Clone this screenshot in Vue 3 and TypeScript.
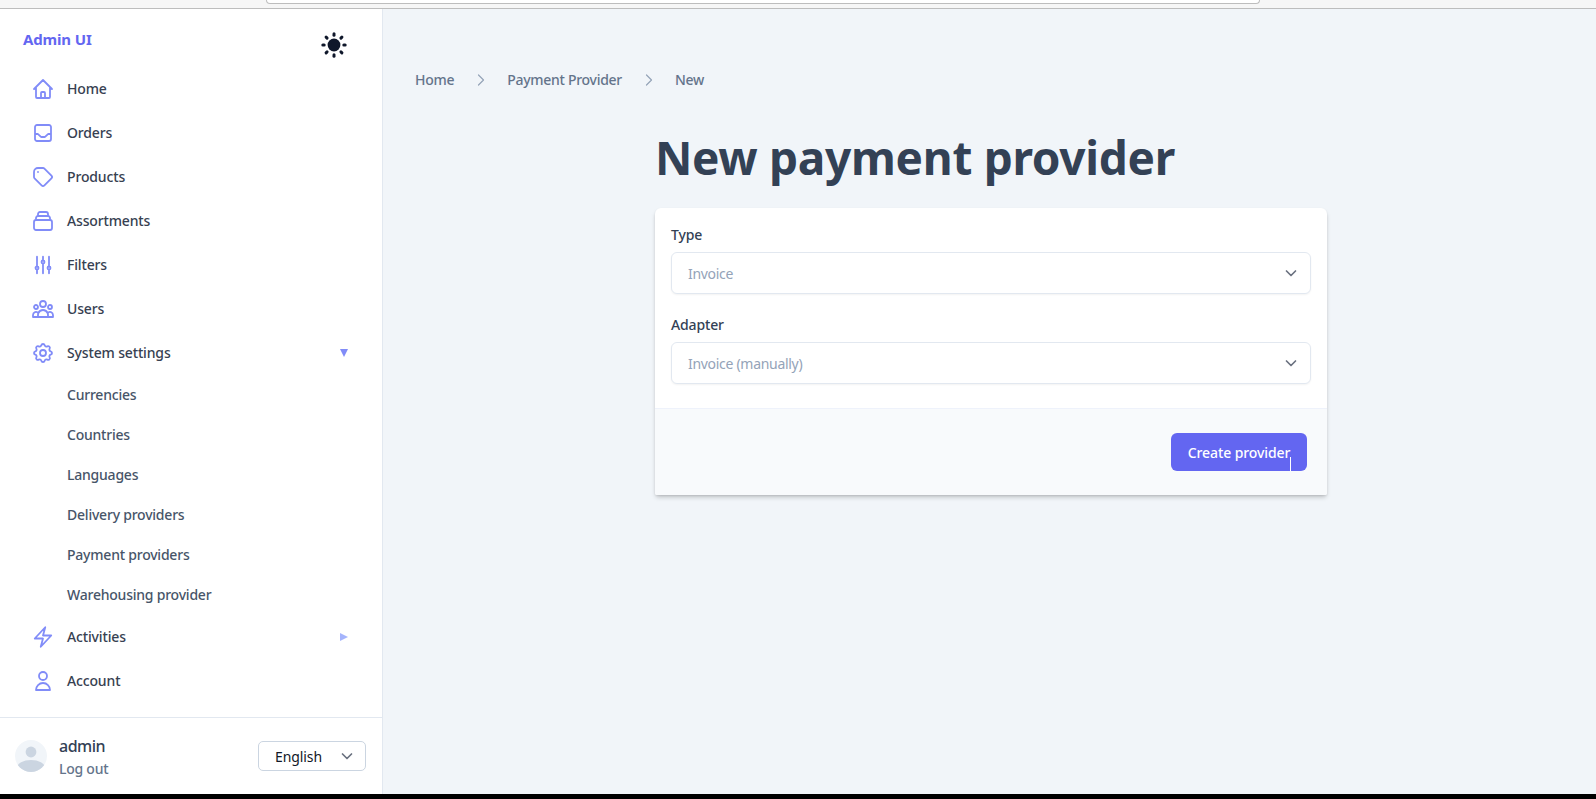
<script setup lang="ts">
interface NavItem {
  label: string
  icon: string[]
  caret?: 'down' | 'right'
  children?: string[]
}

const navItems: NavItem[] = [
  { label: 'Home', icon: ['M3 12l2-2m0 0l7-7 7 7M5 10v10a1 1 0 001 1h3m10-11l2 2m-2-2v10a1 1 0 01-1 1h-3m-6 0a1 1 0 001-1v-4a1 1 0 011-1h2a1 1 0 011 1v4a1 1 0 001 1m-6 0h6'] },
  { label: 'Orders', icon: ['M20 13V6a2 2 0 00-2-2H6a2 2 0 00-2 2v7m16 0v5a2 2 0 01-2 2H6a2 2 0 01-2-2v-5m16 0h-2.586a1 1 0 00-.707.293l-2.414 2.414a1 1 0 01-.707.293h-3.172a1 1 0 01-.707-.293l-2.414-2.414A1 1 0 006.586 13H4'] },
  { label: 'Products', icon: ['M7 7h.01M7 3h5c.512 0 1.024.195 1.414.586l7 7a2 2 0 010 2.828l-7 7a2 2 0 01-2.828 0l-7-7A1.994 1.994 0 013 12V7a4 4 0 014-4z'] },
  { label: 'Assortments', icon: ['M19 11H5m14 0a2 2 0 012 2v6a2 2 0 01-2 2H5a2 2 0 01-2-2v-6a2 2 0 012-2m14 0V9a2 2 0 00-2-2M5 11V9a2 2 0 012-2m0 0V5a2 2 0 012-2h6a2 2 0 012 2v2M7 7h10'] },
  { label: 'Filters', icon: ['M6 13.5V3.75m0 9.75a1.5 1.5 0 010 3m0-3a1.5 1.5 0 000 3m0 3.75V16.5m12-3V3.75m0 9.75a1.5 1.5 0 010 3m0-3a1.5 1.5 0 000 3m0 3.75V16.5m-6-9V3.75m0 3.75a1.5 1.5 0 010 3m0-3a1.5 1.5 0 000 3m0 9.75V10.5'] },
  { label: 'Users', icon: ['M17 20h5v-2a3 3 0 00-5.356-1.857M17 20H7m10 0v-2c0-.656-.126-1.283-.356-1.857M7 20H2v-2a3 3 0 015.356-1.857M7 20v-2c0-.656.126-1.283.356-1.857m0 0a5.002 5.002 0 019.288 0M15 7a3 3 0 11-6 0 3 3 0 016 0zm6 3a2 2 0 11-4 0 2 2 0 014 0zM7 10a2 2 0 11-4 0 2 2 0 014 0z'] },
  {
    label: 'System settings',
    caret: 'down',
    icon: [
      'M10.325 4.317c.426-1.756 2.924-1.756 3.35 0a1.724 1.724 0 002.573 1.066c1.543-.94 3.31.826 2.37 2.37a1.724 1.724 0 001.065 2.572c1.756.426 1.756 2.924 0 3.35a1.724 1.724 0 00-1.066 2.573c.94 1.543-.826 3.31-2.37 2.37a1.724 1.724 0 00-2.572 1.065c-.426 1.756-2.924 1.756-3.35 0a1.724 1.724 0 00-2.573-1.066c-1.543.94-3.31-.826-2.37-2.37a1.724 1.724 0 00-1.065-2.572c-1.756-.426-1.756-2.924 0-3.35a1.724 1.724 0 001.066-2.573c-.94-1.543.826-3.31 2.37-2.37.996.608 2.296.07 2.572-1.065z',
      'M15 12a3 3 0 11-6 0 3 3 0 016 0z',
    ],
    children: ['Currencies', 'Countries', 'Languages', 'Delivery providers', 'Payment providers', 'Warehousing provider'],
  },
  { label: 'Activities', caret: 'right', icon: ['M3.75 13.5l10.5-11.25L12 10.5h8.25L9.75 21.75 12 13.5H3.75z'] },
  { label: 'Account', icon: ['M16 7a4 4 0 11-8 0 4 4 0 018 0zM12 14a7 7 0 00-7 7h14a7 7 0 00-7-7z'] },
]

const crumbs: string[] = ['Home', 'Payment Provider', 'New']
const sunRays: number[] = [0, 45, 90, 135, 180, 225, 270, 315]

const fields: { label: string; value: string }[] = [
  { label: 'Type', value: 'Invoice' },
  { label: 'Adapter', value: 'Invoice (manually)' },
]
</script>

<template>
  <div class="page">
    <div class="browser-strip"><div class="url-bar"></div></div>
    <div class="body">
      <aside class="sidebar">
        <div class="brand-row">
          <span class="brand">Admin UI</span>
          <svg class="sun" viewBox="0 0 26 26">
            <circle cx="13" cy="13" r="6.4" fill="#0f172a" />
            <line
              v-for="deg in sunRays"
              :key="deg"
              x1="13"
              y1="1.8"
              x2="13"
              y2="3.2"
              stroke="#0f172a"
              stroke-width="3"
              stroke-linecap="round"
              :transform="`rotate(${deg} 13 13)`"
            />
          </svg>
        </div>
        <nav class="nav">
          <template v-for="item in navItems" :key="item.label">
            <div class="nav-item">
              <svg class="nav-icon" viewBox="0 0 24 24" fill="none" stroke="currentColor" stroke-width="1.8" stroke-linecap="round" stroke-linejoin="round">
                <path v-for="d in item.icon" :key="d" :d="d" />
              </svg>
              <span class="nav-label">{{ item.label }}</span>
              <svg v-if="item.caret === 'down'" class="caret" viewBox="0 0 8 8"><polygon points="0,0 8,0 4,8" fill="#818cf8" /></svg>
              <svg v-if="item.caret === 'right'" class="caret" viewBox="0 0 8 8"><polygon points="0,0 8,4 0,8" fill="#a5b4fc" /></svg>
            </div>
            <div v-for="child in item.children" :key="child" class="nav-child">{{ child }}</div>
          </template>
        </nav>
        <div class="user-row">
          <svg class="avatar" viewBox="0 0 32 32">
            <defs><clipPath id="avatar-clip"><circle cx="16" cy="16" r="16" /></clipPath></defs>
            <g clip-path="url(#avatar-clip)">
              <rect width="32" height="32" fill="#f1f5f9" />
              <circle cx="16" cy="12" r="5.4" fill="#cbd5e1" />
              <ellipse cx="16" cy="28" rx="14" ry="8" fill="#cbd5e1" />
            </g>
          </svg>
          <div class="user-text">
            <span class="user-name">admin</span>
            <span class="logout">Log out</span>
          </div>
          <div class="lang-select">
            <span>English</span>
            <svg class="chev" viewBox="0 0 20 20" fill="none" stroke="#6b7280" stroke-width="1.7" stroke-linecap="round" stroke-linejoin="round"><path d="M5.5 8l4.5 4.5L14.5 8" /></svg>
          </div>
        </div>
      </aside>
      <main class="main">
        <ol class="crumbs">
          <template v-for="(crumb, i) in crumbs" :key="crumb">
            <li class="crumb">{{ crumb }}</li>
            <li v-if="i < crumbs.length - 1" class="crumb-sep">
              <svg viewBox="0 0 8 14" fill="none" stroke="#94a3b8" stroke-width="1.2" stroke-linecap="round" stroke-linejoin="round"><path d="M1.5 2l5 5-5 5" /></svg>
            </li>
          </template>
        </ol>
        <section class="content">
          <h1 class="title">New payment provider</h1>
          <form class="card" @submit.prevent>
            <div class="card-body">
              <div v-for="field in fields" :key="field.label" class="field">
                <label class="field-label">{{ field.label }}</label>
                <div class="select">
                  <span>{{ field.value }}</span>
                  <svg class="chev" viewBox="0 0 20 20" fill="none" stroke="#6b7280" stroke-width="1.7" stroke-linecap="round" stroke-linejoin="round"><path d="M5.5 8l4.5 4.5L14.5 8" /></svg>
                </div>
              </div>
            </div>
            <div class="card-footer">
              <button class="submit" type="submit">Create provider<span class="text-cursor"></span></button>
            </div>
          </form>
        </section>
      </main>
    </div>
    <div class="black-bar"></div>
  </div>
</template>

<style>
html, body { margin: 0; padding: 0; background: #000; }
</style>

<style scoped>
.page {
  width: 1596px;
  height: 799px;
  display: flex;
  flex-direction: column;
  overflow: hidden;
  font-family: "Noto Sans", "Open Sans", sans-serif;
}
.browser-strip {
  height: 8px;
  flex: none;
  background: #f6f6f6;
  border-bottom: 1px solid #bdbdbd;
  display: flex;
  justify-content: flex-start;
  padding-left: 266px;
}
.url-bar {
  width: 992px;
  height: 3px;
  background: #fff;
  border: 1px solid #bdbdbd;
  border-top: 0;
  border-radius: 0 0 5px 5px;
}
.body { flex: 1; display: flex; min-height: 0; }
.black-bar { height: 5px; flex: none; background: #000; }

.sidebar {
  width: 383px;
  flex: none;
  background: #fff;
  border-right: 1px solid #e2e8f0;
  box-sizing: border-box;
  display: flex;
  flex-direction: column;
}
.brand-row {
  height: 58px;
  flex: none;
  display: flex;
  justify-content: space-between;
  padding: 19px 35px 0 23px;
  box-sizing: border-box;
}
.brand { font-size: 15px; line-height: 22px; font-weight: 700; color: #6366f1; letter-spacing: -0.15px; }
.sun { width: 26px; height: 26px; margin-top: 4px; }
.nav { flex: 1; display: flex; flex-direction: column; }
.nav-item {
  height: 44px;
  display: flex;
  align-items: center;
  padding: 0 34px 0 31px;
  flex: none;
}
.nav-icon { width: 24px; height: 24px; color: #818cf8; flex: none; }
.nav-label {
  margin: 0 0 2px 12px;
  flex: 1;
  font-size: 14px;
  font-weight: 500;
  color: #374151;
  letter-spacing: -0.15px;
}
.caret { width: 8px; height: 8px; flex: none; }
.nav-child {
  height: 40px;
  line-height: 40px;
  padding-left: 67px;
  font-size: 14px;
  font-weight: 500;
  color: #475569;
  letter-spacing: -0.22px;
  flex: none;
}
.user-row {
  height: 77px;
  flex: none;
  border-top: 1px solid #e2e8f0;
  box-sizing: border-box;
  display: flex;
  align-items: center;
  padding: 0 16px 0 15px;
}
.avatar { width: 32px; height: 32px; flex: none; }
.user-text { margin: 3px 0 0 12px; flex: 1; display: flex; flex-direction: column; }
.user-name { font-size: 16px; line-height: 22px; font-weight: 500; color: #334155; letter-spacing: -0.5px; }
.logout { font-size: 14px; line-height: 23px; font-weight: 500; color: #64748b; letter-spacing: -0.25px; }
.lang-select {
  width: 108px;
  height: 30px;
  box-sizing: border-box;
  border: 1px solid #cbd5e1;
  border-radius: 5px;
  display: flex;
  align-items: center;
  justify-content: space-between;
  padding: 0 8px 0 16px;
  font-size: 14px;
  letter-spacing: -0.1px;
  color: #111827;
  background: #fff;
}
.chev { width: 20px; height: 20px; flex: none; }

.main { flex: 1; background: #f1f5f9; min-width: 0; }
.crumbs {
  list-style: none;
  margin: 0;
  padding: 60px 0 0 32px;
  display: flex;
  align-items: center;
  height: 22px;
  box-sizing: content-box;
  font-size: 14px;
  font-weight: 500;
  color: #64748b;
  letter-spacing: -0.28px;
}
.crumb { line-height: 22px; }
.crumb-sep { width: 8px; height: 14px; margin: 0 22.5px; display: flex; }
.crumb-sep svg { width: 8px; height: 14px; }
.content { width: 672px; margin: 0 0 0 272px; }
.title {
  margin: 0;
  padding-top: 36px;
  font-size: 46px;
  line-height: 60px;
  height: 60px;
  font-weight: 700;
  color: #334155;
  letter-spacing: -0.3px;
  white-space: nowrap;
}
.card {
  margin-top: 21px;
  height: 287px;
  background: #fff;
  border-radius: 6px 6px 2px 2px;
  overflow: hidden;
  display: flex;
  flex-direction: column;
  box-shadow: 0 3px 5px -1px rgba(0, 0, 0, 0.22), 0 1px 2px rgba(0, 0, 0, 0.08);
}
.card-body { height: 200px; flex: none; padding: 16px 16px 0; box-sizing: border-box; }
.field { height: 90px; }
.field-label { display: block; height: 22px; line-height: 22px; font-size: 14px; font-weight: 500; color: #334155; letter-spacing: -0.15px; margin-bottom: 6px; }
.select {
  height: 42px;
  box-sizing: border-box;
  border: 1px solid #e2e8f0;
  border-radius: 6px;
  box-shadow: 0 1px 2px rgba(0, 0, 0, 0.05);
  display: flex;
  align-items: center;
  justify-content: space-between;
  padding: 0 9px 0 16px;
  font-size: 14px;
  letter-spacing: -0.3px;
  color: #94a3b8;
  background: #fff;
}
.card-footer {
  flex: 1;
  border-top: 1px solid #eef2fb;
  background: #f8fafc;
  display: flex;
  justify-content: flex-end;
  align-items: flex-start;
  padding: 24px 20px 0 0;
}
.submit {
  position: relative;
  width: 136px;
  height: 38px;
  border: 0;
  border-radius: 6px;
  background: #6366f1;
  color: #fff;
  font: inherit;
  font-size: 14px;
  font-weight: 500;
  letter-spacing: -0.1px;
  padding: 0;
}
.text-cursor {
  position: absolute;
  left: 119px;
  top: 24px;
  width: 1px;
  height: 14px;
  background: #fff;
}
</style>
